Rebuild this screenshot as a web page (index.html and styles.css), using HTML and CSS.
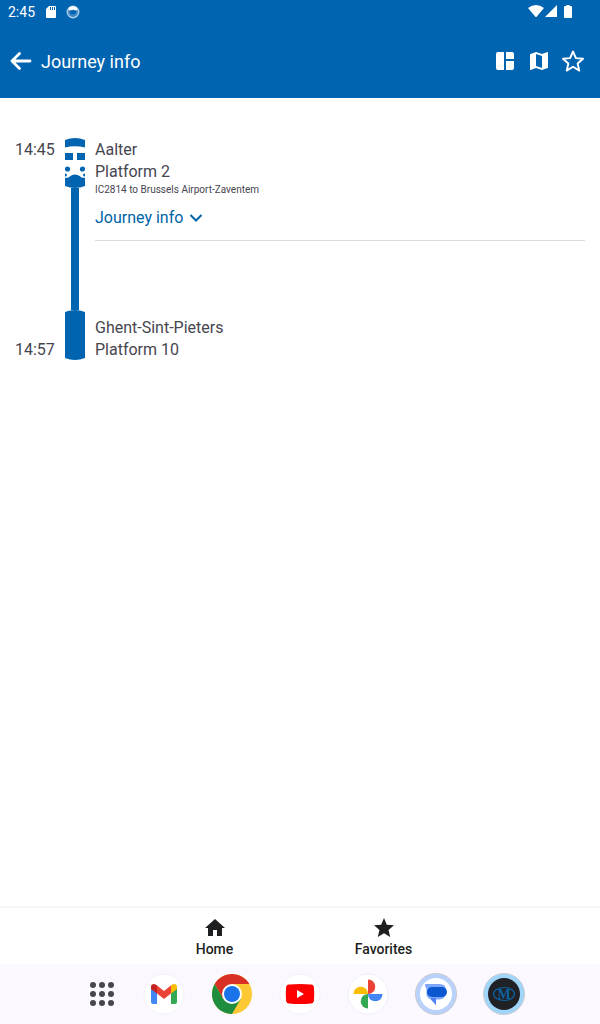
FILE: index.html
```html
<!DOCTYPE html>
<html lang="en">
<head>
<meta charset="utf-8">
<meta name="viewport" content="width=device-width, initial-scale=1">
<title>Journey info</title>
<link rel="stylesheet" href="styles.css">
</head>
<body>
<div class="status-bar">
  <span class="clock">2:45</span>
  <svg class="sd-icon" width="10" height="12" viewBox="0 0 10 12" aria-hidden="true"><path fill="#fff" d="M3 0h6q1 0 1 1v10q0 1-1 1H1q-1 0-1-1V3z"/><path fill="#0064b0" d="M4 1h1v3H4zM6 1h1v3H6zM8 1h1v3H8z"/></svg>
  <svg class="sync-icon" width="14" height="14" viewBox="0 0 14 14" aria-hidden="true"><circle cx="7" cy="7" r="5.700" fill="#3d88c4" stroke="#a9cbe5" stroke-width="1.500"/><path fill="#fff" d="M2.500 3Q7-.5 11.500 3L11 5.500Q7 4 3 5.500z"/><path fill="#0064b0" d="M4 6q3-1 6 0v2q-3 3-6 0z"/></svg>
  <span class="signals">
    <svg width="16" height="12" viewBox="0 0 16 12" aria-hidden="true"><path fill="#fff" d="M0 3Q8-3 16 3L8 12.500z"/></svg>
    <svg width="12" height="12" viewBox="0 0 12 12" aria-hidden="true"><path fill="#fff" d="M12 0v12H0z"/></svg>
    <svg class="battery" width="8" height="13" viewBox="0 0 8 13" aria-hidden="true"><path fill="#fff" d="M2.500 0h3v1H7q1 0 1 1v10q0 1-1 1H1q-1 0-1-1V2q0-1 1-1h1.500z"/></svg>
  </span>
</div>
<header class="app-bar">
  <button class="icon-button back" aria-label="Back"><svg width="22" height="20" viewBox="0 0 22 20"><path d="M9.500 2.500 2 10l7.500 7.500M2 10h18" fill="none" stroke="#fff" stroke-width="2.800" stroke-linecap="round" stroke-linejoin="round"/></svg></button>
  <h1 class="title">Journey info</h1>
  <div class="actions">
    <button class="icon-button" aria-label="Split view"><svg width="24" height="24" viewBox="0 0 24 24" fill="#fff"><path d="M11 21H5q-2 0-2-2V5q0-2 2-2h6zM13 3h6q2 0 2 2v5h-8zM13 12h8v7q0 2-2 2h-6z"/></svg></button>
    <button class="icon-button" aria-label="Map"><svg width="24" height="24" viewBox="0 0 24 24" fill="#fff"><path d="m20.500 3-.160.030L15 5.100 9 3 3.360 4.900A.5.5 0 0 0 3 5.380V20.500a.5.5 0 0 0 .660.470L9 18.900l6 2.100 5.640-1.900a.5.5 0 0 0 .360-.480V3.500a.5.5 0 0 0-.5-.5zM15 19l-6-2.110V5l6 2.110z"/></svg></button>
    <button class="icon-button" aria-label="Add to favorites"><svg width="24" height="24" viewBox="0 0 24 24"><path d="m12 2.500 2.900 6.600 7.100.7-5.400 4.700 1.700 7.100-6.300-3.800-6.300 3.800 1.700-7.100L2 9.800l7.100-.7z" fill="none" stroke="#fff" stroke-width="1.900" stroke-linejoin="round"/></svg></button>
  </div>
</header>
<main class="content">
  <section class="journey">
    <div class="times"><time>14:45</time><time>14:57</time></div>
    <div class="rail" aria-hidden="true">
      <svg width="20" height="50" viewBox="0 0 20 50" fill="#0064b0"><path d="M0 2Q10-2 20 2v7.500Q10 7 0 9.500z"/><path d="M0 15h8v7H0zM12 15h8v7h-8z"/><circle cx="2.500" cy="31" r="2.600"/><circle cx="17.500" cy="31" r="2.600"/><path d="M0 35.500q2 0 2 1.500T0 38.500zM20 35.500q-2 0-2 1.500t2 1.500z"/><path d="M0 40q4 0 5.500-2Q7 36.500 10 36.500t4.500 1.500Q16 40 20 40v8q-10 4-20 0z"/></svg>
      <div class="track"></div>
      <svg width="20" height="50" viewBox="0 0 20 50" fill="#0064b0"><path d="M0 2Q10-2 20 2v46q-10 4-20 0z"/></svg>
    </div>
    <div class="stops">
      <div class="stop departure">
        <p>Aalter</p>
        <p>Platform 2</p>
        <p class="train">IC2814 to Brussels Airport-Zaventem</p>
        <button class="details">Journey info<svg width="14" height="8" viewBox="0 0 14 8"><path d="m1.500 1 5.500 5.500L12.500 1" fill="none" stroke="#0064a8" stroke-width="2"/></svg></button>
      </div>
      <div class="stop">
        <p>Ghent-Sint-Pieters</p>
        <p>Platform 10</p>
      </div>
    </div>
  </section>
</main>
<nav class="tabs">
  <a class="tab" href="#home"><svg width="24" height="24" viewBox="0 0 24 24" fill="#1d1f21"><path d="M10 20v-6h4v6h5v-8h3L12 3 2 12h3v8z"/></svg>Home</a>
  <a class="tab" href="#favorites"><svg width="24" height="24" viewBox="0 0 24 24" fill="#1d1f21"><path d="m12 17.270 6.180 3.730-1.640-7.030L22 9.240l-7.190-.610L12 2 9.190 8.630 2 9.240l5.460 4.730L5.820 21z"/></svg>Favorites</a>
</nav>
<footer class="dock">
  <button class="app all-apps" aria-label="All apps"><svg width="24" height="24" viewBox="0 0 24 24" fill="#46474c"><circle cx="3" cy="3" r="3"/><circle cx="12" cy="3" r="3"/><circle cx="21" cy="3" r="3"/><circle cx="3" cy="12" r="3"/><circle cx="12" cy="12" r="3"/><circle cx="21" cy="12" r="3"/><circle cx="3" cy="21" r="3"/><circle cx="12" cy="21" r="3"/><circle cx="21" cy="21" r="3"/></svg></button>
  <button class="app" aria-label="Gmail"><svg width="44" height="44" viewBox="0 0 44 44"><circle cx="22" cy="22" r="20" fill="#fff" stroke="#f3f0f7"/><path fill="#4285f4" d="M9 16l6 4.500V32h-4q-2 0-2-2z"/><path fill="#34a853" d="M35 16l-6 4.500V32h4q2 0 2-2z"/><path fill="#ea4335" d="M14.500 13 22 19l7.500-6v8L22 27l-7.500-6z"/><path fill="#c5221f" d="M9 17v-2q0-3 3-3 1.500 0 3 1.500v8z"/><path fill="#fbbc04" d="M35 17v-2q0-3-3-3-1.500 0-3 1.500v8z"/></svg></button>
  <button class="app" aria-label="Chrome"><svg width="44" height="44" viewBox="0 0 44 44"><circle cx="22" cy="22" r="20" fill="#fcc934"/><path fill="#d93025" d="M4.680 12A20 20 0 0 1 39.320 12H22L13.340 27z"/><path fill="#1e8e3e" d="M4.680 12A20 20 0 0 0 22 42l8.660-15L22 22l-8.660 5z"/><circle cx="22" cy="22" r="10" fill="#fff"/><circle cx="22" cy="22" r="8" fill="#1a73e8"/></svg></button>
  <button class="app" aria-label="YouTube"><svg width="44" height="44" viewBox="0 0 44 44"><circle cx="22" cy="22" r="20" fill="#fff" stroke="#f3f0f7"/><path fill="#f00" d="M11 12.500q11-1 22 0 3 0 3 4 .5 5.500 0 11 0 4-3 4-11 1-22 0-3 0-3-4-.5-5.500 0-11 0-4 3-4z"/><path fill="#fff" d="M19 18v8l7-4z"/></svg></button>
  <button class="app" aria-label="Photos"><svg width="44" height="44" viewBox="0 0 44 44"><circle cx="22" cy="22" r="20" fill="#fff" stroke="#f3f0f7"/><path fill="#ea4335" d="M22 7.500a7.250 7.250 0 0 1 0 14.500z"/><path fill="#4285f4" d="M36.500 22a7.250 7.250 0 0 1-14.500 0z"/><path fill="#34a853" d="M22 36.500a7.250 7.250 0 0 1 0-14.500z"/><path fill="#fbbc04" d="M7.500 22a7.250 7.250 0 0 1 14.500 0z"/></svg></button>
  <button class="app" aria-label="Messages"><svg width="44" height="44" viewBox="0 0 44 44"><circle cx="22" cy="22" r="20.500" fill="#b8d2fc" stroke="#cbcbd0"/><circle cx="22" cy="22" r="16" fill="#fff"/><path fill="#7ca6fb" d="M12 12h13.500q6.500 0 6.500 6v3q-1 6.500-7 6.500h-3V33l-5-5.500q-4.500-1.500-4.500-6V17l-1.500-3.500Q10.500 12 12 12z"/><path fill="#4f83f5" d="M17 26h5v7l-5-5.500z"/><rect x="13" y="15" width="20" height="10" rx="5" fill="#0b57d0"/></svg></button>
  <button class="app" aria-label="M"><svg width="44" height="44" viewBox="0 0 44 44"><circle cx="22" cy="22" r="20.500" fill="#a0d5fa" stroke="#cbcbd0"/><circle cx="22" cy="22" r="16" fill="#202124"/><ellipse cx="22" cy="22" rx="10.500" ry="6.500" fill="none" stroke="#0c62a0" stroke-width="1.200"/><text class="logo-letter" x="22" y="27" text-anchor="middle">M</text></svg></button>
</footer>
</body>
</html>
```
FILE: styles.css
```css
* { box-sizing: border-box; }

body {
  margin: 0;
  min-height: 100vh;
  display: flex;
  flex-direction: column;
  background: #fff;
  color: #46464f;
  font-family: Roboto, "Liberation Sans", sans-serif;
  font-size: 16px;
  line-height: 22px;
}

svg { display: block; }
p { margin: 0; }

button {
  border: 0;
  padding: 0;
  background: none;
  color: inherit;
  font: inherit;
  cursor: pointer;
}

.status-bar {
  height: 24px;
  display: flex;
  align-items: center;
  padding: 0 28px 0 8px;
  background: #0064b0;
  color: #fff;
  font-size: 14px;
}

.sd-icon { margin-left: 11px; }
.sync-icon { margin-left: 10px; }

.signals {
  display: flex;
  align-items: center;
  gap: 1px;
  margin-left: auto;
  padding-bottom: 2px;
}

.battery { margin-left: 6px; }

.app-bar {
  height: 74px;
  display: flex;
  align-items: center;
  padding: 0 15px 0 10px;
  background: #0064b0;
  color: #fff;
}

.title {
  margin: 0 0 0 9px;
  padding-top: 2px;
  font-size: 18px;
  font-weight: 400;
}

.actions {
  display: flex;
  gap: 10px;
  margin-left: auto;
}

.content {
  flex: 1;
  padding: 40px 15px;
}

.journey {
  display: grid;
  grid-template-columns: 40px 20px 1fr;
  gap: 10px;
}

.times,
.stops {
  display: flex;
  flex-direction: column;
  justify-content: space-between;
  padding-top: 1px;
}

.rail {
  display: flex;
  flex-direction: column;
  align-items: center;
  margin-bottom: 1px;
}

.track {
  flex: 1;
  width: 8px;
  background: #0064b0;
}

.stops { gap: 76px; }

.departure {
  padding-bottom: 11px;
  border-bottom: 1px solid #dcdcdf;
}

.train {
  font-size: 10px;
  line-height: 14px;
}

.details {
  display: flex;
  align-items: center;
  gap: 6px;
  margin-top: 10px;
  color: #0064a8;
}

.tabs {
  display: flex;
  justify-content: center;
  border-top: 2px solid #f6f6f6;
  padding: 8px 2px 6px 0;
}

.tab {
  width: 169px;
  display: flex;
  flex-direction: column;
  align-items: center;
  color: #1d1f21;
  font-size: 14px;
  font-weight: 500;
  line-height: 18px;
  text-decoration: none;
}

.dock {
  height: 60px;
  display: flex;
  align-items: center;
  justify-content: center;
  padding-left: 12px;
  background: #fbf8ff;
}

.app {
  width: 68px;
  display: flex;
  justify-content: center;
}

.all-apps { width: 56px; }

.logo-letter {
  fill: #0c62a0;
  font-family: "Liberation Serif", serif;
  font-size: 14px;
  font-weight: 700;
}
```
